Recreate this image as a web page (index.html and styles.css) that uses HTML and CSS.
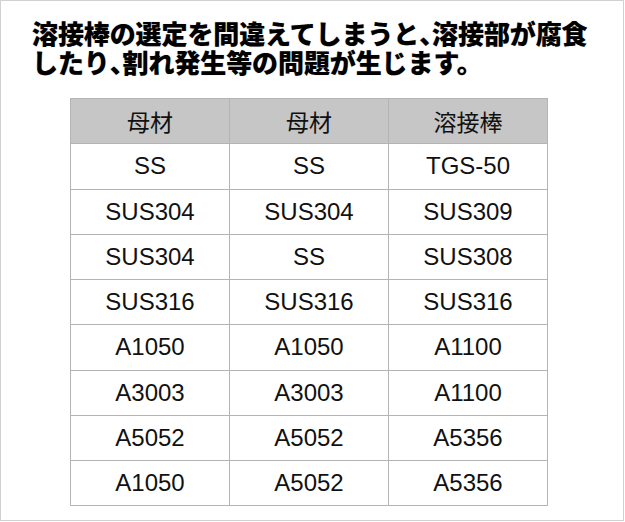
FILE: index.html
```html
<!DOCTYPE html>
<html lang="ja">
<head>
<meta charset="utf-8">
<link rel="stylesheet" href="styles.css">
</head>
<body>
<div class="frame">
  <h1 class="title"><span class="line">溶接棒の選定を間違えてしまうと<span class="punct">、</span>溶接部が腐食</span><span class="line">したり<span class="punct">、</span>割れ発生等の問題が生じます。</span></h1>
  <table class="grid">
    <thead>
      <tr><th>母材</th><th>母材</th><th>溶接棒</th></tr>
    </thead>
    <tbody>
      <tr><td>SS</td><td>SS</td><td>TGS-50</td></tr>
      <tr><td>SUS304</td><td>SUS304</td><td>SUS309</td></tr>
      <tr><td>SUS304</td><td>SS</td><td>SUS308</td></tr>
      <tr><td>SUS316</td><td>SUS316</td><td>SUS316</td></tr>
      <tr><td>A1050</td><td>A1050</td><td>A1100</td></tr>
      <tr><td>A3003</td><td>A3003</td><td>A1100</td></tr>
      <tr><td>A5052</td><td>A5052</td><td>A5356</td></tr>
      <tr><td>A1050</td><td>A5052</td><td>A5356</td></tr>
    </tbody>
  </table>
</div>
</body>
</html>
```

FILE: styles.css
```css
html, body {
  margin: 0;
  padding: 0;
  background: #ffffff;
}

.frame {
  box-sizing: border-box;
  width: 624px;
  height: 521px;
  border: 1px solid #d2d2d2;
  padding: 17px 0 0 31px;
}

.title {
  margin: 0;
  font-family: "Noto Sans CJK JP", sans-serif;
  font-weight: 900;
  font-size: 26px;
  line-height: 29px;
  color: #000;
  letter-spacing: -0.1px;
  text-shadow: 0 0 1px rgba(0,0,0,0.35);
}

.title .line {
  display: block;
  height: 29px;
}

.title .punct {
  font-feature-settings: "halt";
}

.grid {
  margin: 22px 0 0 38px;
  border-collapse: collapse;
  width: 478px;
  table-layout: fixed;
  border: 1px solid #c2c2c2;
}

.grid th,
.grid td {
  height: 44.25px;
  padding: 0;
  text-align: center;
  vertical-align: middle;
  border: 1px solid #b4b4b4;
  color: #111;
}

.grid th {
  background: #c6c6c6;
  font-family: "Noto Sans CJK JP", sans-serif;
  font-weight: 400;
  font-size: 23px;
  line-height: 44px;
}

.grid td {
  font-family: "Liberation Sans", Arial, sans-serif;
  font-size: 24px;
  line-height: 44px;
}
```
